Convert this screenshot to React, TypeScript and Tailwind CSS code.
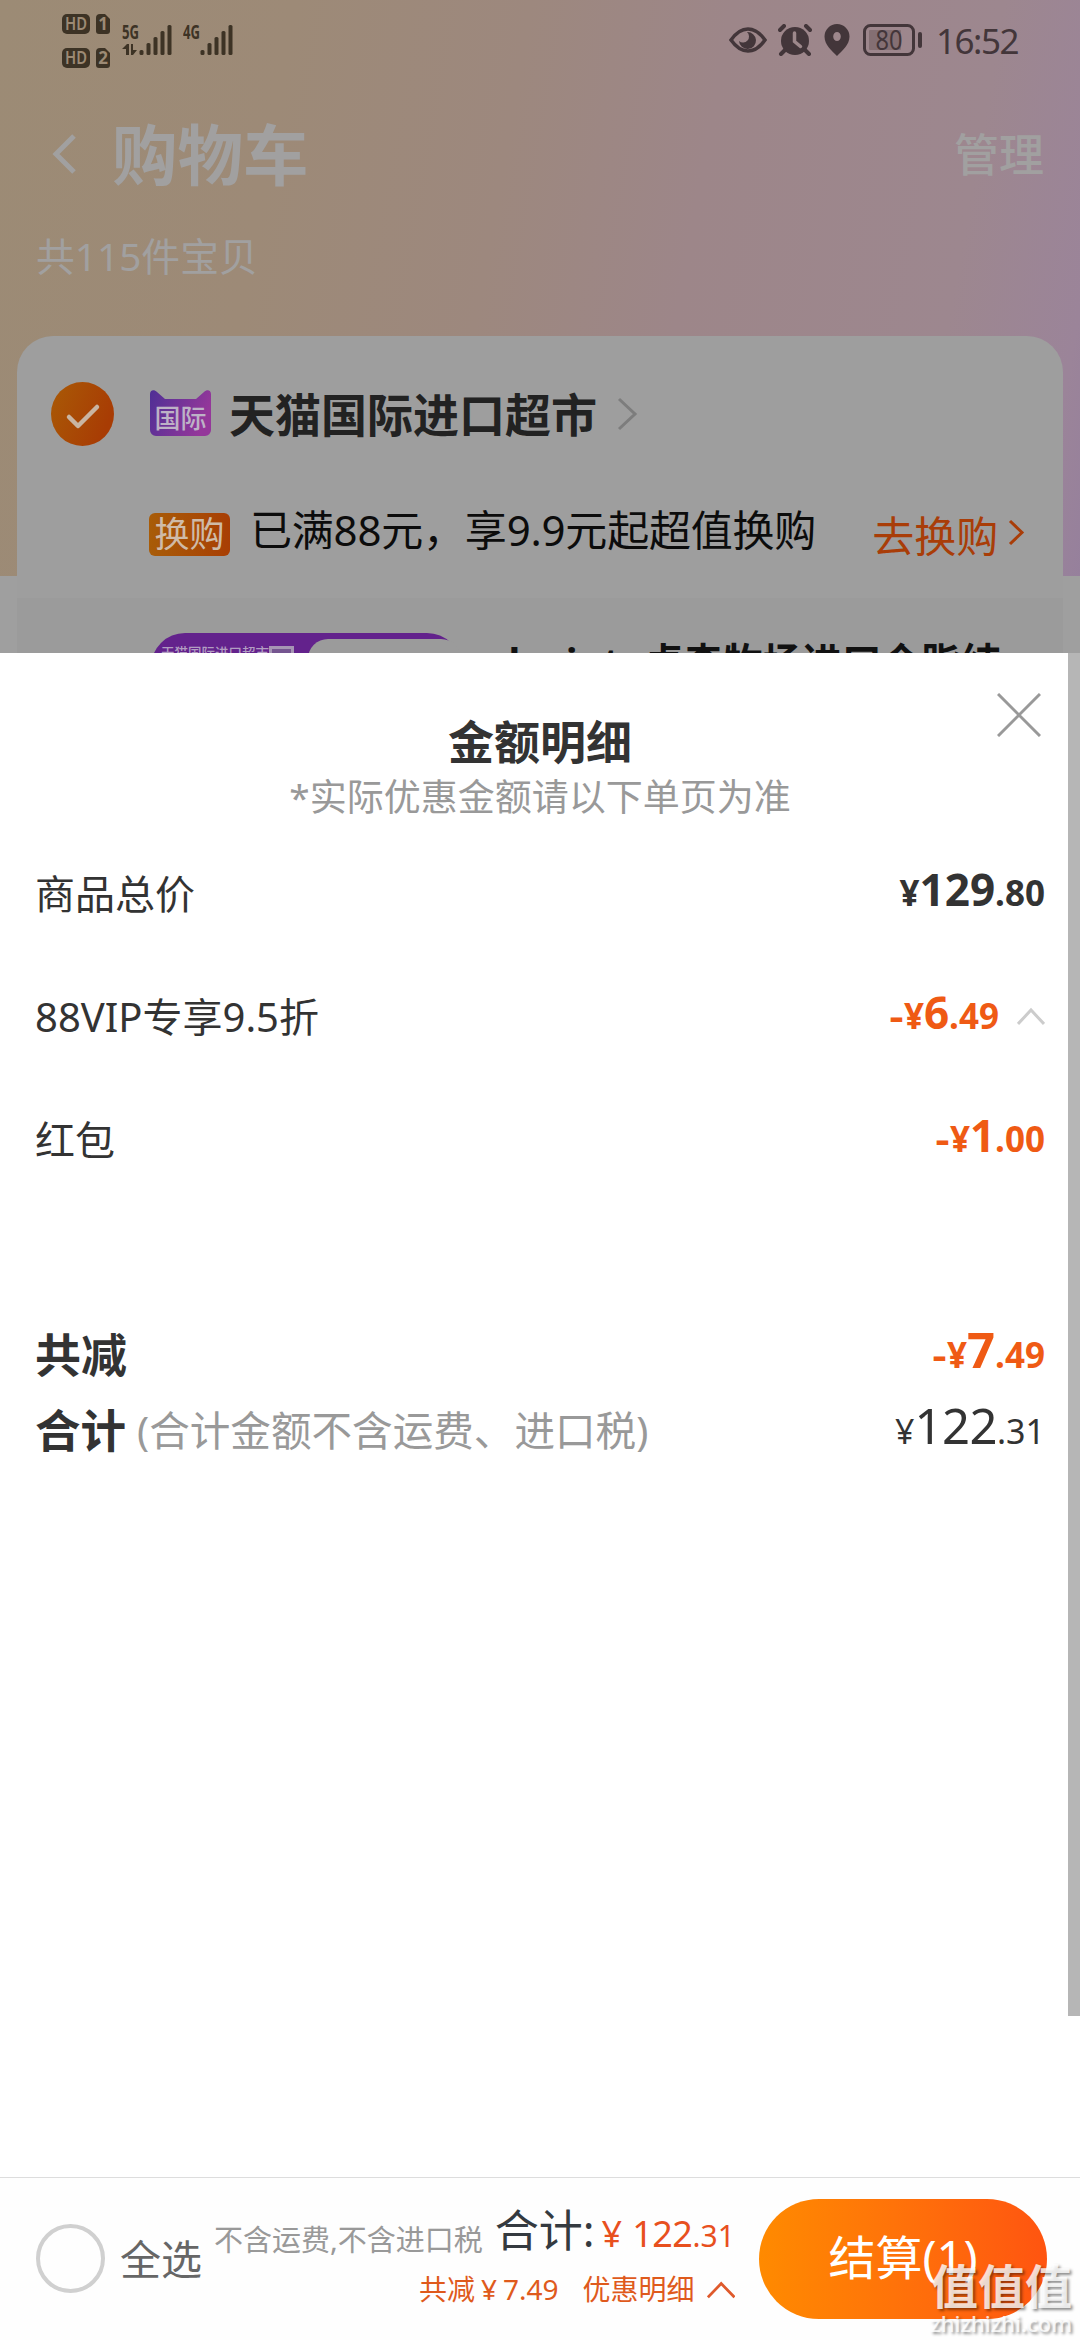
import React from 'react';

type PriceProps = { sign?: string; int: string; dec: string; className?: string; big?: string; small?: string };

const Price: React.FC<PriceProps> = ({ sign = '', int, dec, className = '', big = 'text-[44px]', small = 'text-[35px]' }) => (
  <div className={`-mt-[5px] flex items-baseline leading-[60px] ${className}`}>
    {sign && <span className={`mr-[2px] inline-block scale-x-125 ${small}`}>{sign}</span>}
    <span className={small}>¥</span>
    <span className={big}>{int}</span>
    <span className={small}>.{dec}</span>
  </div>
);

const HdBadge: React.FC<{ n: string }> = ({ n }) => (
  <svg width="50" height="20" viewBox="0 0 50 20">
    <rect x="0" y="0" width="28" height="20" rx="5" fill="#3d3325" />
    <path d="M34 4a4 4 0 0 1 4-4h5l5 5v12a3 3 0 0 1-3 3h-8a3 3 0 0 1-3-3z" fill="#3d3325" />
    <text x="14" y="16" textAnchor="middle" fontSize="17" fontWeight="600" textLength="22" lengthAdjust="spacingAndGlyphs" fill="#9c8a74">HD</text>
    <text x="41" y="16" textAnchor="middle" fontSize="17" fontWeight="700" fill="#9c8a74">{n}</text>
  </svg>
);

const Signal: React.FC<{ label: string; arrows?: boolean }> = ({ label, arrows }) => (
  <svg width="52" height="32" viewBox="0 0 52 32" fill="#3d3325">
    <text x="0" y="15" fontSize="19" fontWeight="700" textLength="17" lengthAdjust="spacingAndGlyphs">{label}</text>
    {arrows && <path d="M0 25l5-5h2v11H4v-6zM9 20h2v6h4l-4 5H9z" />}
    <rect x="17.500" y="26" width="4" height="5" rx="1.500" />
    <rect x="24.500" y="19" width="4" height="12" rx="1.500" />
    <rect x="31.500" y="13" width="4" height="18" rx="1.500" />
    <rect x="38.500" y="7" width="4" height="24" rx="1.500" />
    <rect x="45.500" y="1" width="4" height="30" rx="1.500" />
  </svg>
);

const StatusBar = () => (
  <div className="flex h-[84px] items-start pl-[62px]">
    <div className="flex flex-col gap-[14px] pt-[14px]">
      <HdBadge n="1" />
      <HdBadge n="2" />
    </div>
    <div className="flex gap-[9px] pt-6 pl-[10px]">
      <Signal label="5G" arrows />
      <Signal label="4G" />
    </div>
    <div className="mt-6 ml-auto flex h-8 items-center pr-[62px] text-[#43363a]">
      <svg width="38" height="26" viewBox="0 0 38 26" fill="none">
        <path d="M2 13C8 4.500 13 2 19 2s11 2.500 17 11c-6 8.500-11 11-17 11S8 21.500 2 13z" stroke="currentColor" strokeWidth="3.500" />
        <path d="M18 5a8.500 8.500 0 1 1-8 9 5.500 5.500 0 0 0 8-9z" fill="currentColor" />
      </svg>
      <svg className="ml-[11px]" width="34" height="32" viewBox="0 0 34 32" fill="none" stroke="currentColor" strokeLinecap="round">
        <circle cx="17" cy="17" r="14" fill="currentColor" stroke="none" />
        <path d="M2 6l4-4M32 6l-4-4" strokeWidth="4" />
        <path d="M7 26l-4 4M27 26l4 4" strokeWidth="4" />
        <path d="M16.500 9v8.500l6 5" stroke="#9d888b" strokeWidth="3.500" />
      </svg>
      <svg className="ml-3" width="26" height="32" viewBox="0 0 26 32">
        <path fillRule="evenodd" fill="currentColor" d="M13 0a12.500 12.500 0 0 1 12.500 12.500C25.500 21 18 27 13 32 8 27 .5 21 .5 12.500A12.500 12.500 0 0 1 13 0zm0 8a3.800 4.500 0 1 0 0 9 3.800 4.500 0 0 0 0-9z" />
      </svg>
      <svg className="ml-[13px]" width="60" height="32" viewBox="0 0 60 32">
        <rect x="1.500" y="1.500" width="49" height="29" rx="6" fill="none" stroke="currentColor" strokeWidth="3" />
        <rect x="6" y="6" width="32" height="20" rx="1" fill="#846f73" />
        <text x="26" y="26" textAnchor="middle" fontSize="27" textLength="27" lengthAdjust="spacingAndGlyphs" fill="currentColor">80</text>
        <rect x="55" y="8" width="4" height="16" rx="2" fill="currentColor" />
      </svg>
      <span className="mt-[2px] ml-[13px] text-[35px] leading-8 tracking-[-1.5px] whitespace-nowrap">16:52</span>
    </div>
  </div>
);

const Header = () => (
  <div className="h-[252px] text-[#a1a0a0]">
    <div className="flex h-[142px] items-center pr-[36px] pl-[52px]">
      <svg className="-mt-[3px]" width="24" height="40" viewBox="0 0 24 40" fill="none" stroke="currentColor" strokeWidth="5">
        <path d="M22 2L4 20l18 18" />
      </svg>
      <h1 className="ml-[36px] text-[65.500px] leading-[70px] font-bold">购物车</h1>
      <span className="ml-auto text-[45px] leading-[60px] font-medium">管理</span>
    </div>
    <p className="pl-[36px] text-[38.800px] leading-[60px]">共115件宝贝</p>
  </div>
);

const ShopCard = () => (
  <div className="mx-[17px] h-[317px] rounded-t-[36px] bg-[#9e9e9e]">
    <div className="flex h-[157px] items-center pl-[34px]">
      <svg className="-mt-[2px]" width="63" height="64" viewBox="0 0 63 64">
        <defs>
          <linearGradient id="check" x1="0" y1="0" x2="1" y2="0.400">
            <stop offset="0" stopColor="#a95a06" />
            <stop offset="1" stopColor="#a83c04" />
          </linearGradient>
        </defs>
        <ellipse cx="31.500" cy="32" rx="31.500" ry="32" fill="url(#check)" />
        <path d="M18 35l9 9 19-19" fill="none" stroke="#c9b5a2" strokeWidth="4.500" strokeLinecap="round" strokeLinejoin="round" />
      </svg>
      <svg className="-mt-[3px] ml-9" width="61" height="46" viewBox="0 0 61 46">
        <defs>
          <linearGradient id="tmall" x1="0" y1="0" x2="1" y2="0.300">
            <stop offset="0" stopColor="#4f2f95" />
            <stop offset="1" stopColor="#94379a" />
          </linearGradient>
        </defs>
        <path d="M0 4C0 0 4-1 7 2l8 7h31l8-7c3-3 7-2 7 2v36a6 6 0 0 1-6 6H6a6 6 0 0 1-6-6z" fill="url(#tmall)" />
        <text x="30.500" y="38" textAnchor="middle" fontSize="26" fontWeight="500" fill="#bdb2c6">国际</text>
      </svg>
      <h2 className="-mt-[2px] ml-[18px] text-[46px] leading-[60px] font-bold text-[#222]">天猫国际进口超市</h2>
      <svg className="-mt-[2px] ml-[20px]" width="22" height="34" viewBox="0 0 22 34" fill="none" stroke="#7d7d7d" strokeWidth="3">
        <path d="M2 2l16 15L2 32" />
      </svg>
    </div>
    <div className="flex h-[105px] items-start pl-[132px]">
      <span className="mt-5 h-[43px] w-[81px] rounded-md bg-linear-to-r from-[#a85c08] to-[#a83e04] text-center text-[35px] leading-[42px] text-[#cfbba8]">换购</span>
      <span className="mt-[7px] ml-[20px] text-[42px] leading-[60px] tracking-[-0.2px] text-[#0c0c0c]">已满88元，享9.9元起超值换购</span>
      <span className="mt-[13px] ml-[56px] text-[42px] leading-[60px] text-[#a93d08]">去换购</span>
      <svg className="mt-[26px] ml-[10px]" width="18" height="27" viewBox="0 0 18 27" fill="none" stroke="#a93d08" strokeWidth="3">
        <path d="M2 2l12 11.500L2 25" />
      </svg>
    </div>
    <div className="flex h-[55px] items-start overflow-hidden bg-[#9b9b9b] pl-[134px]">
      <div className="mt-[35px] flex h-[60px] w-[310px] shrink-0 items-start rounded-t-[34px] bg-[#63228c]">
        <span className="mt-[12px] ml-[10px] text-[13.500px] leading-4 font-medium whitespace-nowrap text-[#b29dc2]">天猫国际进口超市</span>
        <span className="mt-[13px] h-5 w-[25px] border-3 border-[#a695b4] bg-[#755590]" />
        <span className="mt-[6px] ml-[14px] h-[50px] w-[153px] rounded-t-[20px] bg-[#9b9b9b]" />
      </div>
      <span className="mt-[34px] ml-[22px] flex text-[39.600px] leading-[60px] font-bold whitespace-nowrap text-[#111]">
        <span className="w-[161px] pr-px text-right">devinty</span>卓森牧场进口全脂纯
      </span>
    </div>
  </div>
);

const Sheet = () => (
  <div className="relative h-[1524px] bg-white">
    <div className="absolute top-0 right-0 h-[1363px] w-3 bg-[#b6b6b6]" />
    <svg className="absolute top-[40px] right-[39px]" width="44" height="44" viewBox="0 0 44 44" stroke="#999" strokeWidth="3">
      <path d="M1 1l42 42M43 1L1 43" />
    </svg>
    <div className="px-[35px] pt-[58px] text-[#333]">
      <h3 className="text-center text-[46px] leading-[60px] font-bold">金额明细</h3>
      <p className="mt-[2px] text-center text-[37px] leading-[48px] text-[#999]">*实际优惠金额请以下单页为准</p>
      <div className="mt-[11px] text-[40px]">
        <div className="flex h-[123px] items-center justify-between">
          <span>商品总价</span>
          <Price int="129" dec="80" className="font-bold" />
        </div>
        <div className="flex h-[123px] items-center">
          <span>88VIP专享9.5折</span>
          <Price sign="-" int="6" dec="49" className="ml-auto font-bold text-[#ef5a14]" />
          <svg className="ml-[18px]" width="28" height="19" viewBox="0 0 28 19" fill="none" stroke="#ccc" strokeWidth="3">
            <path d="M1 17L14 3l13 14" />
          </svg>
        </div>
        <div className="flex h-[123px] items-center justify-between">
          <span>红包</span>
          <Price sign="-" int="1" dec="00" className="font-bold text-[#ef5a14]" />
        </div>
      </div>
      <div className="mt-[115px]">
        <div className="flex h-[76px] items-center justify-between">
          <span className="text-[46px] font-bold">共减</span>
          <Price sign="-" int="7" dec="49" big="text-[49px]" className="font-bold text-[#ef5a14]" />
        </div>
        <div className="flex h-[76px] items-center">
          <span className="text-[45.500px] font-bold">合计</span>
          <span className="mt-[2px] ml-[11px] text-[40.600px] text-[#999]">(合计金额不含运费、进口税)</span>
          <Price int="122" dec="31" big="text-[49px] tracking-[-0.5px]" small="text-[34px]" className="ml-auto" />
        </div>
      </div>
    </div>
  </div>
);

const BottomBar = () => (
  <div className="relative flex h-[163px] items-start border-t border-[#ddd] bg-[#fefefe] pl-[36px]">
    <span className="mt-[46px] h-[69px] w-[69px] rounded-full border-4 border-[#d0d0d0]" />
    <span className="mt-[51px] ml-[15px] text-[41px] leading-[60px] text-[#666]">全选</span>
    <div className="ml-[12px] w-[521px]">
      <div className="mt-[22px] flex h-[60px] items-baseline whitespace-nowrap">
        <span className="relative top-1 text-[29px] text-[#999]">不含运费,不含进口税</span>
        <span className="ml-[12px] text-[44px] leading-[60px] text-[#343a40]">合计:</span>
        <span className="ml-[7px] text-[36px] text-[#e8501e]">¥</span>
        <span className="ml-[10px] text-[36px] tracking-[-0.5px] text-[#e8501e]">122</span>
        <span className="text-[30px] text-[#e8501e]">.31</span>
      </div>
      <div className="mt-px flex items-center pl-[205px] text-[28px] leading-[56px] whitespace-nowrap text-[#df5a1c]">
        <span>共减</span>
        <span className="ml-[6px]">¥</span>
        <span className="ml-[6px]">7.49</span>
        <span className="ml-[24px]">优惠明细</span>
        <svg className="ml-[12px]" width="31" height="19" viewBox="0 0 31 19" fill="none" stroke="#df5a2c" strokeWidth="3">
          <path d="M1 18L15.500 3 30 18" />
        </svg>
      </div>
    </div>
    <button className="mt-[21px] ml-[24px] h-[120px] w-[288px] rounded-full bg-linear-to-r from-[#ff8a00] to-[#ff5410] pb-1 text-[47px] text-white">结算(1)</button>
    <div className="absolute right-[8px] bottom-[4px] text-right text-white/80 [text-shadow:2px_2px_3px_rgba(0,0,0,0.45)]">
      <div className="text-[47px] leading-[48px] font-bold">值值值</div>
      <div className="text-[22px] leading-[26px] font-medium">zhizhizhi.com</div>
    </div>
  </div>
);

export default function App() {
  return (
    <div className="h-[2340px] w-[1080px] overflow-hidden bg-white font-['Noto_Sans','Noto_Sans_CJK_SC',sans-serif]">
      <div className="h-[653px] overflow-hidden bg-[#9f9f9f] bg-[linear-gradient(100deg,#9c8b75_0%,#9d8a77_25%,#9d887e_45%,#9d8689_62%,#9d878f_85%,#9b8499_96%,#96809c_100%)] bg-[length:100%_576px] bg-no-repeat">
        <StatusBar />
        <Header />
        <ShopCard />
      </div>
      <Sheet />
      <BottomBar />
    </div>
  );
}
